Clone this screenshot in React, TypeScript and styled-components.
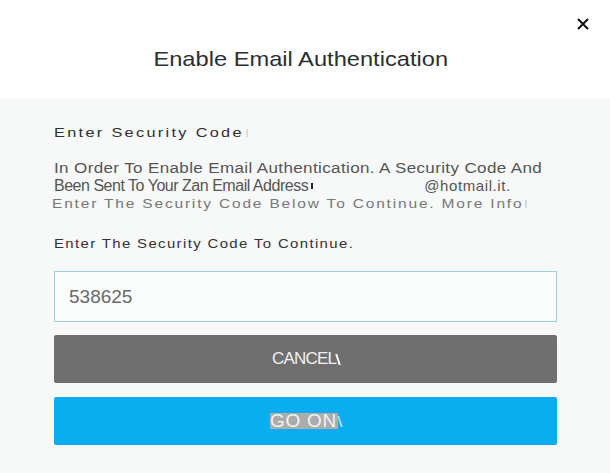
import React from "react";
import styled, { createGlobalStyle } from "styled-components";

const Global = createGlobalStyle`
  html, body { margin: 0; padding: 0; background: #f7f8f8; }
  body { font-family: "Liberation Sans", Arial, sans-serif; }
  * { box-sizing: border-box; }
`;

const Modal = styled.div`
  width: 610px;
  height: 473px;
  display: flex;
  flex-direction: column;
  background: #f7f8f8;
  overflow: hidden;
`;

const Header = styled.header`
  position: relative;
  height: 98px;
  background: #ffffff;
  display: flex;
  align-items: center;
  justify-content: center;
  padding: 20px 9px 0 0;
`;

const Title = styled.h1`
  margin: 0;
  font-size: 21px;
  font-weight: 400;
  color: #2e2e2e;
  transform: scaleX(1.127);
  transform-origin: center;
`;

const Close = styled.button`
  position: absolute;
  top: 16px;
  right: 19px;
  width: 16px;
  height: 16px;
  padding: 0;
  border: 0;
  background: transparent;
  display: flex;
  align-items: center;
  justify-content: center;
`;

const Body = styled.main`
  flex: 1;
  display: flex;
  flex-direction: column;
  padding: 26px 53px 0 54px;
`;

const Line = styled.p<{
  $mt?: number;
  $color?: string;
  $size?: number;
  $spacing?: number;
  $indent?: number;
  $sx?: number;
}>`
  margin: ${(p) => p.$mt ?? 0}px 0 0 ${(p) => p.$indent ?? 0}px;
  font-size: ${(p) => p.$size ?? 13}px;
  line-height: 18px;
  color: ${(p) => p.$color ?? "#333"};
  letter-spacing: ${(p) => p.$spacing ?? 0}px;
  white-space: nowrap;
  display: flex;
  align-items: center;
  transform: scaleX(${(p) => p.$sx ?? 1});
  transform-origin: left center;
`;

const Condensed = styled.p`
  margin: 0;
  font-size: 16px;
  line-height: 17px;
  color: #555;
  letter-spacing: -0.48px;
  white-space: nowrap;
  display: flex;
  align-items: center;
`;

const Domain = styled.span`
  margin-left: 111px;
  letter-spacing: 0.6px;
  font-size: 15px;
  color: #555;
`;

const Tick = styled.span<{ $color: string; $h?: number; $ml?: number; $w?: number }>`
  display: inline-block;
  width: ${(p) => p.$w ?? 1}px;
  height: ${(p) => p.$h ?? 8}px;
  margin-left: ${(p) => p.$ml ?? 2}px;
  background: ${(p) => p.$color};
`;

const Input = styled.div`
  margin-top: 18px;
  height: 51px;
  border: 1px solid #9fcfda;
  background: #fafbfb;
  display: flex;
  align-items: center;
  padding-left: 14px;
  font-size: 19px;
  color: #6a6a6a;
`;

const Button = styled.div<{ $bg: string; $mt: number }>`
  margin-top: ${(p) => p.$mt}px;
  height: 48px;
  border-radius: 2px;
  background: ${(p) => p.$bg};
  display: flex;
  align-items: center;
  justify-content: center;
  font-size: 17px;
  color: #f0f0f0;
  letter-spacing: -0.8px;
`;

const Slash = styled.span<{ $color: string }>`
  display: inline-block;
  width: 2px;
  height: 11px;
  margin-left: 1px;
  background: ${(p) => p.$color};
  transform: skewX(18deg);
`;

const Highlight = styled.span`
  background: #acacac;
  color: #f2f2f2;
  font-size: 19px;
  letter-spacing: 0.7px;
  padding: 0 1px 0 0;
  line-height: 16px;
  height: 16px;
`;

export default function App() {
  return (
    <>
      <Global />
      <Modal>
        <Header>
          <Title>Enable Email Authentication</Title>
          <Close aria-label="Close">
            <svg width="14" height="14" viewBox="0 0 14 14">
              <path d="M2 2 L12 12 M12 2 L2 12" stroke="#111" strokeWidth="2" />
            </svg>
          </Close>
        </Header>
        <Body>
          <Line $size={12.5} $spacing={1.8} $sx={1.3} $color="#2f2f2f">
            Enter Security Code<Tick $color="#cfcfcf" />
          </Line>
          <Line $mt={17} $size={14} $color="#555" $spacing={0.3} $sx={1.216}>
            In Order To Enable Email Authentication. A Security Code And
          </Line>
          <Condensed>
            Been Sent To Your Zan Email Address
            <Tick $color="#222" $h={6} $ml={3} $w={2} />
            <Domain>@hotmail.it.</Domain>
          </Condensed>
          <Line $mt={1} $size={13.5} $color="#777" $spacing={1.6} $sx={1.146} $indent={-2}>
            Enter The Security Code Below To Continue. More Info<Tick $color="#a9c3d6" />
          </Line>
          <Line $mt={22} $color="#333" $spacing={1.2} $sx={1.147}>
            Enter The Security Code To Continue.
          </Line>
          <Input>538625</Input>
          <Button $bg="#6f6f6f" $mt={13}>
            CANCEL<Slash $color="#ffffff" />
          </Button>
          <Button $bg="#0aaeee" $mt={14}>
            <Highlight>GO ON</Highlight>
            <Slash $color="#9fe0fb" />
          </Button>
        </Body>
      </Modal>
    </>
  );
}
